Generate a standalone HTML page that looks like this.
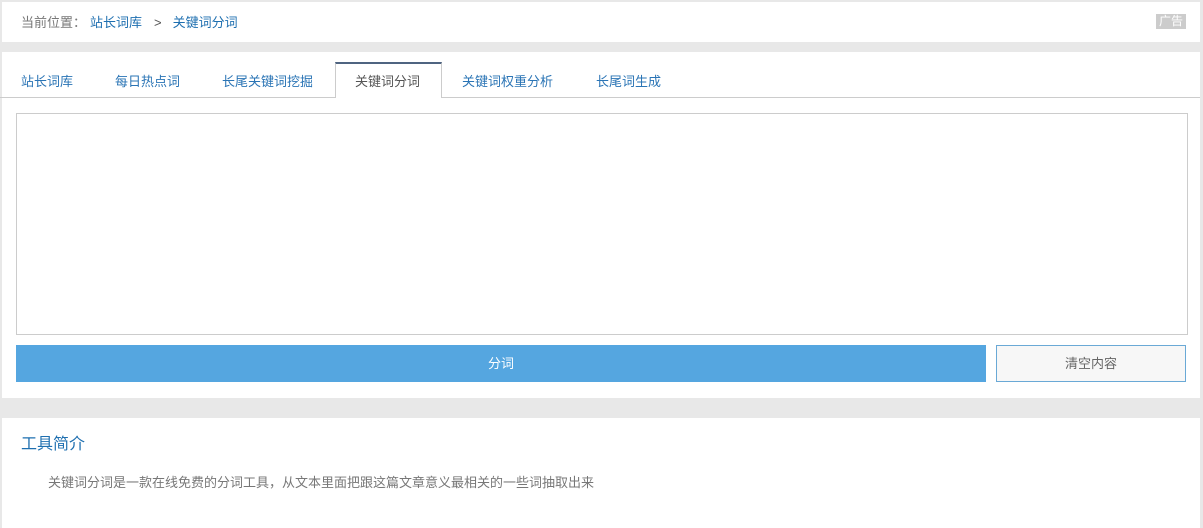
<!DOCTYPE html>
<html><head><meta charset="utf-8"><style>
*{margin:0;padding:0;box-sizing:border-box}
body{width:1203px;height:528px;background:#e8e8e8;font-family:"Liberation Sans","Noto Sans CJK SC",sans-serif;font-size:13px;position:relative;overflow:hidden}
.p{position:absolute;background:#fff;left:2px;width:1198px}
a{color:#1e6fb0;text-decoration:none}
.tab{position:absolute;top:71px;color:#2a74b5;font-size:13px}
</style></head><body>
<div class="p" style="top:2px;height:40px">
<div style="position:absolute;left:19px;top:10px;color:#777">当前位置：<a style="margin-left:4px">站长词库</a><span style="margin:0 11px 0 12px;color:#555">&gt;</span><a>关键词分词</a></div>
<div style="position:absolute;left:1154px;top:12px;width:30px;height:15px;background:#ccc;color:#fff;font-size:12px;line-height:15px;text-align:center">广告</div>
</div>
<div class="p" style="top:52px;height:346px">
<div style="position:absolute;left:-2px;top:45px;width:1200px;height:1px;background:#ccc"></div>
<div style="position:absolute;left:333px;top:10px;width:107px;height:36px;background:#fff;border:1px solid #ccc;border-top:2px solid #4f6481;border-bottom:none"></div>
</div>
<span class="tab" style="left:21px">站长词库</span>
<span class="tab" style="left:115px">每日热点词</span>
<span class="tab" style="left:222px">长尾关键词挖掘</span>
<span class="tab" style="left:355px;color:#555">关键词分词</span>
<span class="tab" style="left:462px">关键词权重分析</span>
<span class="tab" style="left:596px">长尾词生成</span>
<div style="position:absolute;left:16px;top:113px;width:1172px;height:222px;border:1px solid #ccc;background:#fff"></div>
<div style="position:absolute;left:16px;top:345px;width:970px;height:37px;background:#55a6e0;color:#fff;text-align:center;line-height:37px">分词</div>
<div style="position:absolute;left:996px;top:345px;width:190px;height:37px;background:#f7f7f7;border:1px solid #6aa9d6;color:#666;text-align:center;line-height:35px">清空内容</div>
<div class="p" style="top:418px;height:110px">
<div style="position:absolute;left:19px;top:12px;color:#1e6fb0;font-size:16px">工具简介</div>
<div style="position:absolute;left:46px;top:54px;color:#777">关键词分词是一款在线免费的分词工具，从文本里面把跟这篇文章意义最相关的一些词抽取出来</div>
</div>
</body></html>
